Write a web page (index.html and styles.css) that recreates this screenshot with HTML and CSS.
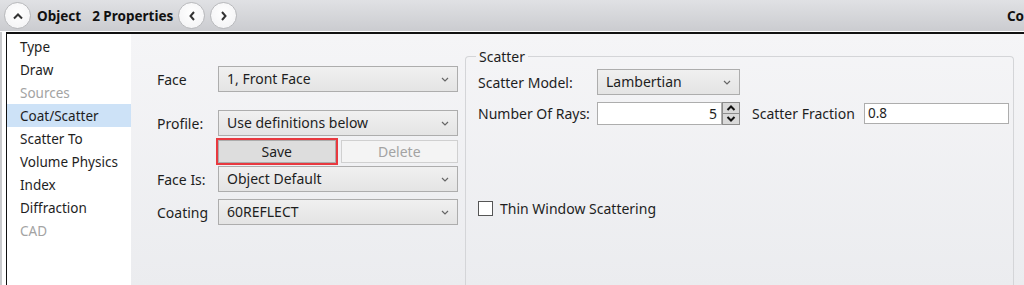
FILE: index.html
```html
<!DOCTYPE html>
<html lang="en">

<head>
  <meta charset="UTF-8">
  <title>Object Properties</title>
  <link rel="stylesheet" href="styles.css">
</head>

<body>
  <div class="app">
    <!-- Title bar -->
    <header class="titlebar">
      <button class="round-btn">
        <svg width="12" height="8" viewBox="0 0 12 8"><path d="M2 6.5 L6 2.5 L10 6.5" /></svg>
      </button>
      <span class="title">Object</span>
      <span class="title count">2 Properties</span>
      <button class="round-btn nav-prev">
        <svg width="8" height="12" viewBox="0 0 8 12"><path d="M6 2 L2.5 6 L6 10" /></svg>
      </button>
      <button class="round-btn">
        <svg width="8" height="12" viewBox="0 0 8 12"><path d="M2 2 L5.5 6 L2 10" /></svg>
      </button>
      <span class="title edge">Co</span>
    </header>

    <div class="main">
      <!-- Property pages -->
      <ul class="page-list">
        <li>Type</li>
        <li>Draw</li>
        <li class="disabled">Sources</li>
        <li class="selected">Coat/Scatter</li>
        <li>Scatter To</li>
        <li>Volume Physics</li>
        <li>Index</li>
        <li>Diffraction</li>
        <li class="disabled">CAD</li>
      </ul>

      <div class="content">
        <!-- Face settings -->
        <div class="face-form">
          <div class="row">
            <label class="lbl">Face</label>
            <div class="select wide">1, Front Face<svg class="chev" width="8" height="5" viewBox="0 0 8 5"><path d="M1 1 L4 4 L7 1" /></svg></div>
          </div>
          <div class="row gap-profile">
            <label class="lbl">Profile:</label>
            <div class="select wide">Use definitions below<svg class="chev" width="8" height="5" viewBox="0 0 8 5"><path d="M1 1 L4 4 L7 1" /></svg></div>
          </div>
          <div class="row gap-buttons">
            <span class="lbl"></span>
            <div class="btn-pair">
              <button class="btn save">Save</button>
              <button class="btn" disabled>Delete</button>
            </div>
          </div>
          <div class="row gap-faceis">
            <label class="lbl">Face Is:</label>
            <div class="select wide">Object Default<svg class="chev" width="8" height="5" viewBox="0 0 8 5"><path d="M1 1 L4 4 L7 1" /></svg></div>
          </div>
          <div class="row gap-coating">
            <label class="lbl">Coating</label>
            <div class="select wide">60REFLECT<svg class="chev" width="8" height="5" viewBox="0 0 8 5"><path d="M1 1 L4 4 L7 1" /></svg></div>
          </div>
        </div>

        <!-- Scatter group -->
        <fieldset class="scatter">
          <legend>Scatter</legend>
          <div class="row">
            <label class="lbl-s">Scatter Model:</label>
            <div class="select model">Lambertian<svg class="chev" width="8" height="5" viewBox="0 0 8 5"><path d="M1 1 L4 4 L7 1" /></svg></div>
          </div>
          <div class="row gap-rays">
            <label class="lbl-s">Number Of Rays:</label>
            <div class="spin">
              <div class="spin-value">5</div>
              <div class="spin-btns">
                <span class="spin-btn"><svg width="10" height="6" viewBox="0 0 10 6"><path d="M1.5 5 L5 1.5 L8.5 5" /></svg></span>
                <span class="spin-btn"><svg width="10" height="6" viewBox="0 0 10 6"><path d="M1.5 1 L5 4.5 L8.5 1" /></svg></span>
              </div>
            </div>
            <label class="lbl-frac">Scatter Fraction</label>
            <div class="textbox">0.8</div>
          </div>
          <div class="row gap-check">
            <span class="checkbox"></span>
            <span>Thin Window Scattering</span>
          </div>
        </fieldset>
      </div>
    </div>
  </div>
</body>

</html>
```

FILE: styles.css
```css
body {
  margin: 0;
  font-family: 'Noto Sans', 'Open Sans', sans-serif;
  font-size: 13px;
  color: #1e1e1e;
  background: #fff;
}

.app {
  width: 1024px;
  height: 285px;
  overflow: hidden;
}

/* Title bar */
.titlebar {
  height: 32px;
  display: flex;
  align-items: center;
  padding-left: 4px;
  background: linear-gradient(#e0e1e4, #cbccd0);
  border-bottom: 1px solid #fff;
  box-sizing: border-box;
}

.round-btn {
  width: 27px;
  height: 27px;
  padding: 0;
  border-radius: 50%;
  border: 1px solid #b8b9bc;
  background: radial-gradient(circle at 50% 40%, #ffffff, #f1f1f3);
  display: flex;
  align-items: center;
  justify-content: center;
}

.round-btn svg path {
  fill: none;
  stroke: #333;
  stroke-width: 2;
}

.nav-prev {
  margin-left: 5px;
  margin-right: 5px;
}

.title {
  font-weight: bold;
  font-size: 13.5px;
  color: #111;
  margin-left: 6px;
}

.count {
  margin-left: 11px;
}

.edge {
  margin-left: auto;
  margin-right: 0;
}

/* Main area */
.main {
  display: flex;
  height: 253px;
  border-top: 2px solid #111;
  border-left: 1px solid #111;
  margin-left: 6px;
  position: relative;
}

.main::before {
  content: "";
  position: absolute;
  left: -7px;
  top: -2px;
  bottom: 0;
  width: 2px;
  background: #c9cacd;
}

.page-list {
  list-style: none;
  margin: 0;
  padding: 1px 0 0;
  width: 124px;
  background: #fff;
}

.page-list li {
  height: 23px;
  line-height: 24px;
  padding-left: 13px;
  font-size: 13.5px;
}

.page-list li.disabled {
  color: #a3a3a3;
}

.page-list li.selected {
  background: #cde2f7;
}

.content {
  flex: 1;
  display: flex;
  background: linear-gradient(#f5f5f7, #ebecef);
}

/* Face form */
.face-form {
  width: 308px;
  padding: 32px 0 0 26px;
}

.row {
  display: flex;
  align-items: center;
}

.lbl {
  width: 61px;
  font-size: 14px;
}

.gap-profile { margin-top: 18px; }
.gap-buttons { margin-top: 4px; }
.gap-faceis { margin-top: 3px; }
.gap-coating { margin-top: 7px; }

.select {
  position: relative;
  height: 26px;
  line-height: 24px;
  box-sizing: border-box;
  padding-left: 8px;
  border: 1px solid #adadad;
  background: linear-gradient(#f0f0f0, #e4e4e4);
  font-size: 14px;
}

.select .chev {
  position: absolute;
  right: 8px;
  top: 10px;
}

.chev path {
  fill: none;
  stroke: #666;
  stroke-width: 1.2;
}

.wide {
  width: 240px;
}

.btn-pair {
  width: 240px;
  display: flex;
  gap: 5px;
}

.btn {
  flex: 1;
  height: 23px;
  padding: 0;
  font-family: inherit;
  font-size: 14px;
  color: #1e1e1e;
  border: 1px solid #acacac;
  background: #dddddd;
}

.btn.save {
  outline: 2px solid #e8393f;
  outline-offset: 0;
}

.btn:disabled {
  color: #a3a3a3;
  background: #f4f4f4;
  border-color: #d0d0d0;
}

/* Scatter group */
.scatter {
  flex: 1;
  margin: 13px 10px 0 0;
  padding: 3px 0 0 12px;
  border: 1px solid #d4d5d8;
  border-bottom: none;
  border-radius: 4px 4px 0 0;
  min-width: 0;
}

.scatter legend {
  padding: 0 3px;
  margin-left: -2px;
  font-size: 14px;
}

.lbl-s {
  width: 119px;
  font-size: 14px;
}

.model {
  width: 143px;
}

.gap-rays { margin-top: 7px; }

.spin {
  display: flex;
  width: 143px;
  height: 23px;
}

.spin-value {
  flex: 1;
  border: 1px solid #adadad;
  background: #fff;
  text-align: right;
  padding-right: 4px;
  line-height: 21px;
  font-size: 14px;
}

.spin-btns {
  width: 18px;
  display: flex;
  flex-direction: column;
}

.spin-btn {
  flex: 1;
  display: flex;
  align-items: center;
  justify-content: center;
  background: #d9d9d9;
  border: 1px solid #8c8c8c;
  box-sizing: border-box;
}

.spin-btn + .spin-btn {
  border-top: none;
}

.spin-btn path {
  fill: none;
  stroke: #111;
  stroke-width: 2;
}

.lbl-frac {
  margin-left: 12px;
  width: 112px;
  font-size: 14px;
}

.textbox {
  width: 145px;
  height: 21px;
  box-sizing: border-box;
  border: 1px solid #adadad;
  background: #fff;
  padding-left: 3px;
  line-height: 19px;
  font-size: 13.5px;
}

.gap-check {
  margin-top: 74px;
  font-size: 14px;
}

.checkbox {
  width: 13px;
  height: 13px;
  border: 1px solid #555;
  background: #fff;
  margin-right: 7px;
}
```
